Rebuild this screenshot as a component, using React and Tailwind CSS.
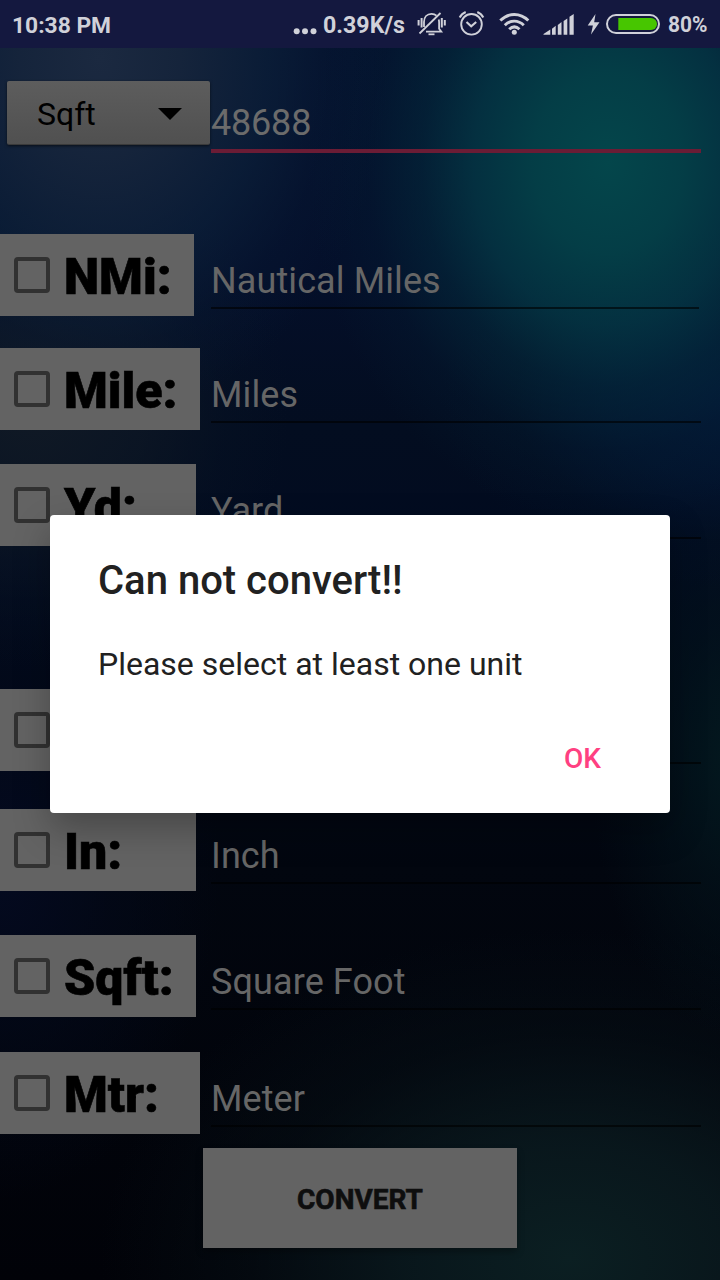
const units = [
  { label: 'NMi:', hint: 'Nautical Miles', gap: 'mt-0', box: 'w-[194px]', line: 'w-[488px]' },
  { label: 'Mile:', hint: 'Miles', gap: 'mt-8', box: 'w-[200px]', line: 'w-[490px]' },
  { label: 'Yd:', hint: 'Yard', gap: 'mt-[34px]', box: 'w-[196px]', line: 'w-[490px]' },
  { label: 'Ft:', hint: 'Feet', gap: 'mt-[143px]', box: 'w-[196px]', line: 'w-[490px]' },
  { label: 'In:', hint: 'Inch', gap: 'mt-[38px]', box: 'w-[196px]', line: 'w-[490px]' },
  { label: 'Sqft:', hint: 'Square Foot', gap: 'mt-11', box: 'w-[196px]', line: 'w-[490px]' },
  { label: 'Mtr:', hint: 'Meter', gap: 'mt-[35px]', box: 'w-[200px]', line: 'w-[490px]' },
];

function StatusBar() {
  return (
    <header className="flex h-12 items-center bg-[#14183f] font-bold text-[#d0d1d9]">
      <span className="ml-3 w-[280px] whitespace-nowrap pt-1 text-[22.800px] leading-[46px]">10:38 PM</span>
      <svg className="h-12 w-[31px]" viewBox="292 0 31 48" fill="currentColor">
        <circle cx="296.700" cy="31.300" r="3" />
        <circle cx="305" cy="31.300" r="3" />
        <circle cx="313.500" cy="31.300" r="3" />
      </svg>
      <span className="w-[89px] whitespace-nowrap pt-0.5 text-[23.200px] leading-[46px]">0.39K/s</span>
      <svg className="h-12 w-[42px]" viewBox="412 0 42 48" fill="none" stroke="currentColor" strokeWidth="1.800">
        <path d="M424 27V22c0-5 3-8.200 7.500-8.200 2 0 3.700.6 5 1.800M438.700 19.500c.3 1 .4 2 .4 3v6.200l2.200 3H426" />
        <path d="M440.500 13 419.500 33.500" />
        <path d="M428.500 34.300h6" />
        <path d="M421.600 18v9.500M441.800 18v9.500" strokeWidth="2" />
        <path d="M418.600 20v5.500M444.800 20v5.500" strokeWidth="2" />
      </svg>
      <svg className="h-12 w-[38px]" viewBox="454 0 38 48" fill="none" stroke="currentColor" strokeWidth="1.900">
        <circle cx="471.500" cy="24.300" r="10.300" />
        <path d="m466.500 22 4.700 4.300 5-4.300" strokeWidth="2.100" />
        <path d="M459.700 17.500c1-2.200 3-4.200 6-5.500M483.300 17.500c-1-2.200-3-4.200-6-5.500" strokeWidth="2" />
      </svg>
      <svg className="h-12 w-12" viewBox="492 0 48 48" fill="none" stroke="currentColor" strokeWidth="2.900">
        <path d="M500.300 20.600c8-8.100 20-8.100 28 0M504.800 25.200c5.500-5.500 13.500-5.500 19 0M509.200 29.300c3.200-3 7.100-3 10.300 0" />
        <circle cx="514.300" cy="32.200" r="2.500" fill="currentColor" stroke="none" />
      </svg>
      <svg className="h-12 w-[44px]" viewBox="540 0 44 48" fill="currentColor">
        <path d="M543.500 34.700v-.6l6.800-4.600v5.200zM552 34.700v-6l3.700-3v9zM557.800 34.700v-9.700l3.700-3v12.700zM563.600 34.700V21l3.700-2.500v16.200zM569.500 34.700V16.800l4.200-2.800v20.700z" />
      </svg>
      <svg className="h-12 w-[84px]" viewBox="584 0 84 48" fill="none">
        <path d="M595.500 14 587.700 25.500h5.200L591 34.500l8.500-12.200h-5.300z" fill="currentColor" />
        <rect x="607" y="15" width="52" height="18" rx="9" stroke="currentColor" strokeWidth="2" />
        <path d="M618.300 18H651a6 6 0 0 1 0 12h-32.700z" fill="#47c600" />
      </svg>
      <span className="origin-left scale-x-95 pt-0.5 text-[22px] leading-[46px]">80%</span>
    </header>
  );
}

function UnitRow({ unit }) {
  return (
    <div className={`flex h-[82px] shrink-0 ${unit.gap}`}>
      <div className="w-[211px] shrink-0">
        <label className={`flex h-full items-center bg-[#636363] pl-3.5 ${unit.box}`}>
          <span className="size-9 shrink-0 rounded-[4px] border-4 border-[#313131]" />
          <span className="ml-3.5 pt-1 text-[50px] font-black leading-[78px] text-black [-webkit-text-stroke:0.6px_black]">{unit.label}</span>
        </label>
      </div>
      <div className={`h-[75px] border-b-2 border-black/60 pt-[21px] text-4xl leading-[53px] tracking-[0.1px] text-[#666666] ${unit.line}`}>
        {unit.hint}
      </div>
    </div>
  );
}

function Dialog() {
  return (
    <div className="absolute left-[50px] top-[515px] flex h-[298px] w-[620px] flex-col rounded-[4px] bg-white px-12 text-[#212121] shadow-[0_16px_36px_rgba(0,0,0,0.28)]">
      <h2 className="mt-[41px] text-[40px] font-medium leading-[50px]">Can not convert!!</h2>
      <p className="mt-[38px] text-[32px] leading-10">Please select at least one unit</p>
      <button className="mr-[21px] mt-[55px] self-end text-[28px] font-medium leading-10 text-[#ff4081]">OK</button>
    </div>
  );
}

export default function App() {
  return (
    <div className="relative flex h-[1280px] w-[720px] flex-col overflow-hidden bg-[#020a1c] font-['Roboto',sans-serif]">
      <StatusBar />
      <main className="flex flex-1 flex-col bg-[radial-gradient(ellipse_300px_360px_at_608px_115px,#04464bff_0%,#044249e8_25%,#043c48b8_45%,#03304078_62%,#03243838_80%,#03203400_100%),radial-gradient(ellipse_290px_360px_at_100px_10px,#1b2940ff_0%,#16253cf0_28%,#0c203ab8_58%,#081a3650_80%,#06143000_100%),radial-gradient(ellipse_260px_260px_at_30px_360px,#101925ff_0%,#0e1825b0_45%,#08142450_75%,#04102400_100%),radial-gradient(ellipse_300px_190px_at_740px_350px,#031836ff_0%,#031734a0_45%,#03132840_75%,#03103000_100%),radial-gradient(ellipse_150px_280px_at_740px_710px,#03191fff_0%,#03141c90_50%,#020a1400_100%),radial-gradient(ellipse_470px_330px_at_570px_1210px,#0b1f22ff_0%,#0a1a1fd8_35%,#07121870_68%,#02051000_100%),radial-gradient(ellipse_220px_330px_at_0px_820px,#040a20ff_0%,#03091aa0_50%,#02051000_100%),linear-gradient(#04112d_0px,#040f2a_220px,#030d20_380px,#020b20_520px,#02060f_820px,#010208_1232px)]">
        <div className="flex h-[186px] shrink-0 pl-[7px]">
          <div className="mt-[33px] flex h-16 w-[203px] items-center justify-between rounded-[2px] border-b border-[#3a3a3a] bg-linear-to-b from-[#5d5d5d] to-[#505050] pl-[30px] pr-7 text-[32px] leading-[64px] text-black shadow-[0_1px_3px_rgba(0,0,0,0.6)]">
            <span className="pt-0.5">Sqft</span>
            <svg className="mt-0.5 h-3 w-6" viewBox="0 0 24 12"><path d="M0 0h24L12 12z" /></svg>
          </div>
          <div className="ml-px mt-12 h-[57px] w-[490px] border-b-4 border-[#6b1c35] pt-px text-4xl leading-[53px] tracking-[-0.2px] text-[#6b6b6b]">48688</div>
        </div>
        {units.map((unit) => <UnitRow key={unit.label} unit={unit} />)}
        <button className="ml-[203px] mt-3.5 h-[100px] w-[314px] shrink-0 bg-[#636363] pt-1 text-[28px] font-bold text-[#0e0e0e] shadow-[0_4px_7px_rgba(0,0,0,0.3)] [-webkit-text-stroke:0.6px_#0e0e0e]">CONVERT</button>
      </main>
      <Dialog />
    </div>
  );
}
